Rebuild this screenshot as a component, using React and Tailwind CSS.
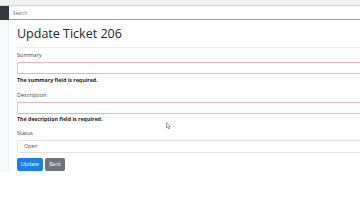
export default function App() {
  return (
    <div className="w-[360px] h-[202px] bg-white overflow-hidden" style={{ fontFamily: '"Open Sans", "Liberation Sans", sans-serif' }}>
      <div className="h-[6px] bg-[#f1f1f1] border-b border-[#d4d4d4]"></div>
      <div className="flex h-[14px]">
        <div className="w-[9px] bg-[#343a40]"></div>
        <div className="flex-1 flex items-center pl-[4px] border-b-[1.5px] border-[#9a9a9a] border-t border-t-[#f4f4f4] text-[4.5px] text-[#6c757d]">Search</div>
      </div>
      <div className="flex h-[152px]">
        <div className="w-[9px] bg-[#f8f9fa] border-r border-[#f0f0f0]"></div>
        <div className="flex-1 pl-[8px] relative overflow-hidden">
          <div className="pt-[6px] text-[12.5px] leading-[16px] text-[#212529]">Update Ticket 206</div>
          <div className="mt-[5px] border-t border-[#ececec]"></div>
          <div className="mt-[4px] text-[5.5px] leading-[7px] text-[#444]">Summary</div>
          <div className="mt-[3px] -mr-[10px] h-[12px] border border-[#e8b4bc] rounded-[2px]"></div>
          <div className="mt-[2px] text-[5.3px] leading-[8px] font-bold text-[#212529]">The summary field is required.</div>
          <div className="mt-[8px] text-[5.5px] leading-[7px] text-[#444]">Description</div>
          <div className="mt-[3px] -mr-[10px] h-[12px] border border-[#e8b4bc] rounded-[2px]"></div>
          <div className="mt-[1px] text-[5.3px] leading-[8px] font-bold text-[#212529]">The description field is required.</div>
          <div className="mt-[7px] text-[5.5px] leading-[7px] text-[#444]">Status</div>
          <div className="mt-[3px] -mr-[10px] h-[13px] border border-[#e2e2e2] rounded-[2px] flex items-center pl-[6px] text-[5.3px] text-[#555]">Open</div>
          <div className="mt-[5px] flex gap-[2px]">
            <div className="w-[26px] h-[13px] bg-[#1a7fe8] rounded-[2px] text-white text-[5.3px] flex items-center justify-center">Update</div>
            <div className="w-[20px] h-[13px] bg-[#6c757d] rounded-[2px] text-white text-[5.3px] flex items-center justify-center">Back</div>
          </div>
          <svg className="absolute left-[157px] top-[102px]" width="5" height="8" viewBox="0 0 5 8">
            <path d="M0.5 0.5 L0.5 6 L1.8 4.8 L2.8 7 L3.6 6.6 L2.7 4.5 L4.4 4.5 Z" fill="#fff" stroke="#444" strokeWidth="0.5" />
          </svg>
        </div>
      </div>
    </div>
  );
}
